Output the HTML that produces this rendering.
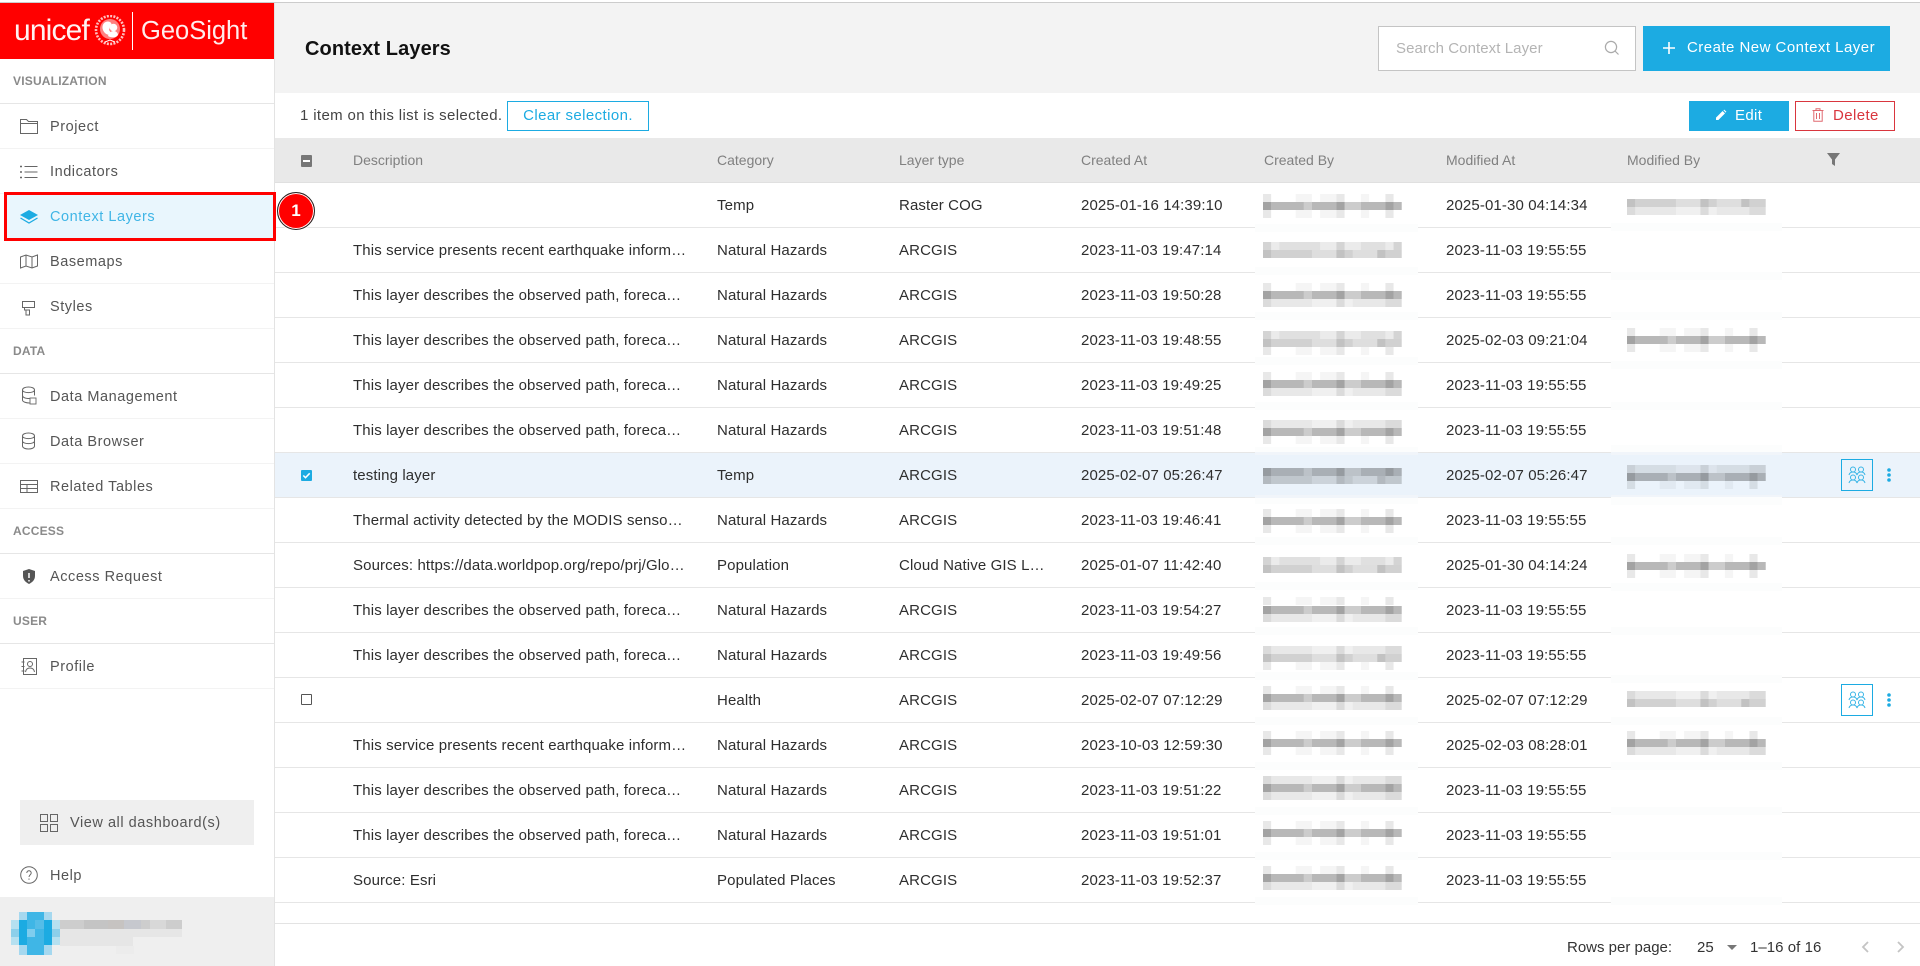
<!DOCTYPE html>
<html><head><meta charset="utf-8"><title>Context Layers</title>
<style>
*{box-sizing:border-box}
html,body{margin:0;padding:0;width:1920px;height:966px;overflow:hidden;background:#fff;font-family:"Liberation Sans",sans-serif}
.a{position:absolute}
#top{left:0;top:2px;width:1920px;height:1px;background:#ccc}
#side{left:0;top:3px;width:275px;height:963px;border-right:1px solid #e3e3e3;background:#fff}
.logo{left:0;top:3px;width:274px;height:56px;background:#f00;color:#fff;overflow:hidden}
.sec{position:absolute;left:13px;font-size:12px;font-weight:700;color:#8a8a8a;line-height:16px;letter-spacing:.2px}
.ln{position:absolute;left:0;width:274px;height:1px;background:#e6e6e6}
.ln.t{background:#f3f3f3}
.it{position:absolute;left:50px;font-size:14.5px;line-height:20px;color:#555;letter-spacing:.55px;white-space:nowrap;margin-top:1px}
.r{position:absolute;left:275px;width:1645px;height:45px;border-bottom:1px solid #e6e6e6;font-size:15px;letter-spacing:.12px;color:#2e2e2e;line-height:46px;white-space:nowrap}
.r span{position:absolute;top:0}
.c1{left:78px}.c2{left:442px}.c3{left:624px}.c4{left:806px}.c6{left:1171px}
.h{position:absolute;left:275px;top:138px;width:1645px;height:45px;background:#e9e9e9;border-bottom:1px solid #e0e0e0;font-size:14px;color:#808080;line-height:44px}
.h span{position:absolute;top:0}
.btn{position:absolute;text-align:center;white-space:nowrap}
.sel{background:#ebf3fb}
</style></head><body>
<div class="a" id="top"></div>
<div class="a" style="left:275px;top:3px;width:1645px;height:90px;background:#f3f3f3"></div>
<div class="a" style="left:305px;top:36px;font-size:20px;font-weight:700;line-height:26px;color:#111;letter-spacing:.1px">Context Layers</div>
<div class="a" style="left:1378px;top:26px;width:258px;height:45px;background:#fff;border:1px solid #c4c4c4"></div>
<div class="a" style="left:1396px;top:38px;font-size:15px;line-height:22px;color:#b4b4b4;letter-spacing:.08px">Search Context Layer</div>
<svg class="a" style="left:1603px;top:39px" width="18" height="18" viewBox="0 0 18 18" fill="none" stroke="#aaa" stroke-width="1.2"><circle cx="8" cy="8" r="5.6"/><path d="M12 12l3.5 3.5"/></svg>
<div class="a" style="left:1643px;top:26px;width:247px;height:45px;background:#1cabe2"></div>
<svg class="a" style="left:1662px;top:41px" width="14" height="14" viewBox="0 0 14 14" stroke="#fff" stroke-width="1.6"><path d="M7 1v12M1 7h12"/></svg>
<div class="a" style="left:1687px;top:37px;font-size:15px;line-height:22px;color:#fff;letter-spacing:.47px;white-space:nowrap">Create New Context Layer</div>

<div class="a" style="left:300px;top:105px;font-size:15px;line-height:20px;color:#444;letter-spacing:.36px;white-space:nowrap;margin-top:1px">1 item on this list is selected.</div>
<div class="btn" style="left:507px;top:101px;width:142px;height:30px;border:1px solid #1cabe2;color:#1cabe2;font-size:15px;line-height:28px;letter-spacing:.4px">Clear selection.</div>
<div class="a" style="left:1689px;top:101px;width:100px;height:30px;background:#1cabe2"></div>
<svg class="a" style="left:1715px;top:109px" width="12" height="12" viewBox="0 0 12 12" fill="#fff"><path d="M1 11v-2.400L7.600 2 10 4.400 3.400 11zM8.400 1.300l.8-.7 2.200 2.200-.8.8z"/></svg>
<div class="a" style="left:1735px;top:106px;font-size:15px;line-height:20px;color:#fff;letter-spacing:.35px">Edit</div>
<div class="a" style="left:1795px;top:101px;width:100px;height:30px;border:1px solid #d9363e"></div>
<svg class="a" style="left:1812px;top:108px" width="12" height="14" viewBox="0 0 12 14" fill="none" stroke="#e06a70" stroke-width="1"><path d="M.5 2.500h11M4 2.500V.8h4v1.700M1.800 2.500v10.800h8.400V2.500M4.500 5v6M7.500 5v6"/></svg>
<div class="a" style="left:1833px;top:106px;font-size:15px;line-height:20px;color:#d9363e;letter-spacing:.4px">Delete</div>

<div class="h"><span style="left:78px">Description</span><span class="c2">Category</span><span class="c3">Layer type</span><span class="c4">Created At</span><span style="left:989px">Created By</span><span class="c6">Modified At</span><span style="left:1352px">Modified By</span></div>
<div class="a" style="left:301px;top:155px;width:11px;height:12px;background:#777;border-radius:1px"></div>
<div class="a" style="left:303px;top:160px;width:7px;height:2px;background:#fff"></div>
<svg class="a" style="left:1827px;top:153px" width="13" height="13" viewBox="0 0 13 13" fill="#777"><path d="M0 0h13L8 6.500V13L5 11V6.500z"/></svg>

<div class="r" style="top:183px"><span class="c2">Temp</span><span class="c3">Raster COG</span><span class="c4">2025-01-16 14:39:10</span><span class="c6">2025-01-30 04:14:34</span></div>
<div class="r" style="top:228px"><span class="c1">This service presents recent earthquake inform…</span><span class="c2">Natural Hazards</span><span class="c3">ARCGIS</span><span class="c4">2023-11-03 19:47:14</span><span class="c6">2023-11-03 19:55:55</span></div>
<div class="r" style="top:273px"><span class="c1">This layer describes the observed path, foreca…</span><span class="c2">Natural Hazards</span><span class="c3">ARCGIS</span><span class="c4">2023-11-03 19:50:28</span><span class="c6">2023-11-03 19:55:55</span></div>
<div class="r" style="top:318px"><span class="c1">This layer describes the observed path, foreca…</span><span class="c2">Natural Hazards</span><span class="c3">ARCGIS</span><span class="c4">2023-11-03 19:48:55</span><span class="c6">2025-02-03 09:21:04</span></div>
<div class="r" style="top:363px"><span class="c1">This layer describes the observed path, foreca…</span><span class="c2">Natural Hazards</span><span class="c3">ARCGIS</span><span class="c4">2023-11-03 19:49:25</span><span class="c6">2023-11-03 19:55:55</span></div>
<div class="r" style="top:408px"><span class="c1">This layer describes the observed path, foreca…</span><span class="c2">Natural Hazards</span><span class="c3">ARCGIS</span><span class="c4">2023-11-03 19:51:48</span><span class="c6">2023-11-03 19:55:55</span></div>
<div class="r sel" style="top:453px"><span class="c1">testing layer</span><span class="c2">Temp</span><span class="c3">ARCGIS</span><span class="c4">2025-02-07 05:26:47</span><span class="c6">2025-02-07 05:26:47</span></div>
<div class="r" style="top:498px"><span class="c1">Thermal activity detected by the MODIS senso…</span><span class="c2">Natural Hazards</span><span class="c3">ARCGIS</span><span class="c4">2023-11-03 19:46:41</span><span class="c6">2023-11-03 19:55:55</span></div>
<div class="r" style="top:543px"><span class="c1">Sources: https://data.worldpop.org/repo/prj/Glo…</span><span class="c2">Population</span><span class="c3">Cloud Native GIS L…</span><span class="c4">2025-01-07 11:42:40</span><span class="c6">2025-01-30 04:14:24</span></div>
<div class="r" style="top:588px"><span class="c1">This layer describes the observed path, foreca…</span><span class="c2">Natural Hazards</span><span class="c3">ARCGIS</span><span class="c4">2023-11-03 19:54:27</span><span class="c6">2023-11-03 19:55:55</span></div>
<div class="r" style="top:633px"><span class="c1">This layer describes the observed path, foreca…</span><span class="c2">Natural Hazards</span><span class="c3">ARCGIS</span><span class="c4">2023-11-03 19:49:56</span><span class="c6">2023-11-03 19:55:55</span></div>
<div class="r" style="top:678px"><span class="c2">Health</span><span class="c3">ARCGIS</span><span class="c4">2025-02-07 07:12:29</span><span class="c6">2025-02-07 07:12:29</span></div>
<div class="r" style="top:723px"><span class="c1">This service presents recent earthquake inform…</span><span class="c2">Natural Hazards</span><span class="c3">ARCGIS</span><span class="c4">2023-10-03 12:59:30</span><span class="c6">2025-02-03 08:28:01</span></div>
<div class="r" style="top:768px"><span class="c1">This layer describes the observed path, foreca…</span><span class="c2">Natural Hazards</span><span class="c3">ARCGIS</span><span class="c4">2023-11-03 19:51:22</span><span class="c6">2023-11-03 19:55:55</span></div>
<div class="r" style="top:813px"><span class="c1">This layer describes the observed path, foreca…</span><span class="c2">Natural Hazards</span><span class="c3">ARCGIS</span><span class="c4">2023-11-03 19:51:01</span><span class="c6">2023-11-03 19:55:55</span></div>
<div class="r" style="top:858px"><span class="c1">Source: Esri</span><span class="c2">Populated Places</span><span class="c3">ARCGIS</span><span class="c4">2023-11-03 19:52:37</span><span class="c6">2023-11-03 19:55:55</span></div>

<svg class="a" style="left:0;top:0" width="1920" height="966" viewBox="0 0 1920 966">
<defs>
<g id="D" transform="scale(1.02 1)"><path fill-opacity=".36" d="M0 0h8v8H0zM72 0h8v8h-8zM120 0h8v8h-8z"/><path fill-opacity=".28" d="M8 0h32v8H8zM48 0h24v8H48zM96 0h24v8H96zM128 0h8v8h-8z"/><path fill-opacity=".2" d="M40 0h8v8h-8zM80 0h16v8H80z"/></g>
<g id="M" transform="scale(1.02 1)"><path fill-opacity=".24" d="M0 0h8v8H0zM72 0h8v8h-8zM112 0h8v8h-8z"/><path fill-opacity=".18" d="M8 0h40v8H8zM80 0h8v8h-8zM120 0h16v8h-16z"/><path fill-opacity=".13" d="M48 0h24v8H48zM88 0h24v8H88z"/></g>
<g id="N" transform="scale(1.02 1)"><path fill-opacity=".17" d="M0 0h8v8H0zM72 0h8v8h-8zM128 0h8v8h-8z"/><path fill-opacity=".12" d="M16 0h40v8H16zM96 0h24v8H96z"/><path fill-opacity=".08" d="M8 0h8v8H8zM56 0h16v8H56zM80 0h16v8H80zM120 0h8v8h-8z"/></g>
<g id="L" transform="scale(1.02 1)"><path fill-opacity=".14" d="M0 0h8v8H0zM72 0h8v8h-8zM120 0h16v8h-16z"/><path fill-opacity=".09" d="M8 0h40v8H8zM88 0h32v8H88z"/><path fill-opacity=".06" d="M48 0h24v8H48zM80 0h8v8h-8z"/></g>
<g id="F" transform="scale(1.02 1)"><path fill-opacity=".09" d="M0 0h8v8H0zM72 0h8v8h-8zM120 0h8v8h-8z"/><path fill-opacity=".04" d="M32 0h16v8H32zM56 0h16v8H56zM96 0h8v8h-8z"/></g>
</defs>
<g fill="#fcfdfd">
<path d="M1255 224h163v8h-163zM1255 267h163v8h-163zM1255 312h163v8h-163zM1255 357h163v8h-163zM1255 402h163v8h-163zM1255 447h163v5h-163zM1255 497h163v7h-163zM1255 537h163v8h-163zM1255 582h163v8h-163zM1255 627h163v8h-163zM1255 672h163v8h-163zM1255 717h163v8h-163zM1255 762h163v8h-163zM1255 807h163v8h-163zM1255 852h163v8h-163zM1255 897h163v8h-163z"/>
<path d="M1611 223h171v8h-171zM1611 272h171v8h-171zM1611 312h171v8h-171zM1611 361h171v8h-171zM1611 402h171v8h-171zM1611 445h171v7h-171zM1611 497h171v8h-171zM1611 537h171v8h-171zM1611 583h171v8h-171zM1611 627h171v8h-171zM1611 675h171v8h-171zM1611 717h171v8h-171zM1611 762h171v8h-171zM1611 807h171v8h-171zM1611 852h171v8h-171zM1611 897h171v8h-171z"/>
</g>
<path d="M1255 452h163v3h-163zM1255 495h163v3h-163zM1611 452h171v3h-171zM1611 495h171v2h-171z" fill="#f1f5fa"/>
<g transform="translate(1263 0)">
<use href="#F" y="194"/><use href="#D" y="202"/><use href="#F" y="210"/>
<use href="#N" y="242"/><use href="#M" y="250"/>
<use href="#F" y="283"/><use href="#D" y="291"/><use href="#L" y="299"/>
<use href="#N" y="331"/><use href="#M" y="339"/><use href="#F" y="347"/>
<use href="#F" y="372"/><use href="#D" y="380"/><use href="#L" y="388"/>
<use href="#L" y="420"/><use href="#D" y="428"/><use href="#F" y="436"/>
<use href="#D" y="468"/><use href="#M" y="476"/>
<use href="#F" y="509"/><use href="#D" y="517"/><use href="#F" y="525"/>
<use href="#N" y="557"/><use href="#M" y="565"/>
<use href="#F" y="597"/><use href="#D" y="606"/><use href="#L" y="614"/>
<use href="#L" y="646"/><use href="#M" y="654"/><use href="#F" y="662"/>
<use href="#F" y="686"/><use href="#D" y="694"/><use href="#L" y="702"/>
<use href="#F" y="731"/><use href="#D" y="739"/><use href="#F" y="747"/>
<use href="#L" y="776"/><use href="#D" y="784"/><use href="#L" y="792"/>
<use href="#F" y="821"/><use href="#D" y="829"/><use href="#F" y="837"/>
<use href="#F" y="866"/><use href="#D" y="874"/><use href="#L" y="882"/>
</g>
<g transform="translate(1627 0)">
<use href="#M" y="199"/><use href="#L" y="207"/>
<use href="#F" y="328"/><use href="#D" y="336"/><use href="#F" y="344"/>
<use href="#L" y="465"/><use href="#D" y="473"/><use href="#F" y="481"/>
<use href="#F" y="554"/><use href="#D" y="562"/><use href="#F" y="570"/>
<use href="#L" y="691"/><use href="#M" y="699"/>
<use href="#F" y="731"/><use href="#D" y="739"/><use href="#L" y="747"/>
</g>
</svg>

<div class="a" style="left:301px;top:470px;width:11px;height:11px;background:#1cabe2;border-radius:1px"></div>
<svg class="a" style="left:301px;top:470px" width="11" height="11" viewBox="0 0 11 11" fill="none" stroke="#fff" stroke-width="1.500"><path d="M2.300 5.500l2.200 2.200 4.200-4.400"/></svg>
<div class="a" style="left:301px;top:694px;width:11px;height:11px;border:1px solid #555;border-radius:1px"></div>

<div class="a" style="left:1841px;top:459px;width:32px;height:32px;border:1px solid #1cabe2"></div>
<div class="a" style="left:1841px;top:684px;width:32px;height:32px;border:1px solid #1cabe2"></div>
<svg class="a" style="left:1848px;top:466px" width="18" height="18" viewBox="0 0 18 18" fill="none" stroke="#38b5e6" stroke-width="1"><circle cx="5" cy="3.500" r="2.500"/><circle cx="13" cy="3.500" r="2.500"/><path d="M1 9c.5-2 2-3 4-3s3.500 1 4 3c.5-2 2-3 4-3s3.500 1 4 3"/><circle cx="5" cy="11.500" r="2.500"/><circle cx="13" cy="11.500" r="2.500"/><path d="M1 17c.5-2 2-3 4-3s3.500 1 4 3c.5-2 2-3 4-3s3.500 1 4 3"/></svg>
<svg class="a" style="left:1848px;top:691px" width="18" height="18" viewBox="0 0 18 18" fill="none" stroke="#38b5e6" stroke-width="1"><circle cx="5" cy="3.500" r="2.500"/><circle cx="13" cy="3.500" r="2.500"/><path d="M1 9c.5-2 2-3 4-3s3.500 1 4 3c.5-2 2-3 4-3s3.500 1 4 3"/><circle cx="5" cy="11.500" r="2.500"/><circle cx="13" cy="11.500" r="2.500"/><path d="M1 17c.5-2 2-3 4-3s3.500 1 4 3c.5-2 2-3 4-3s3.500 1 4 3"/></svg>
<svg class="a" style="left:1886px;top:467px" width="6" height="16" viewBox="0 0 6 16" fill="#1cabe2"><circle cx="3" cy="3" r="1.800"/><circle cx="3" cy="8" r="1.800"/><circle cx="3" cy="13" r="1.800"/></svg>
<svg class="a" style="left:1886px;top:692px" width="6" height="16" viewBox="0 0 6 16" fill="#1cabe2"><circle cx="3" cy="3" r="1.800"/><circle cx="3" cy="8" r="1.800"/><circle cx="3" cy="13" r="1.800"/></svg>

<div class="a" style="left:275px;top:923px;width:1645px;height:1px;background:#e3e3e3"></div>
<div class="a" style="left:1567px;top:938px;font-size:15px;line-height:20px;color:#333;white-space:nowrap">Rows per page:</div>
<div class="a" style="left:1697px;top:938px;font-size:15px;line-height:20px;color:#333">25</div>
<svg class="a" style="left:1727px;top:945px" width="10" height="5" viewBox="0 0 10 5" fill="#777"><path d="M0 0h10L5 5z"/></svg>
<div class="a" style="left:1750px;top:938px;font-size:15px;line-height:20px;color:#333;white-space:nowrap;letter-spacing:.05px">1–16 of 16</div>
<svg class="a" style="left:1860px;top:940px" width="46" height="14" viewBox="0 0 46 14" fill="none" stroke="#c4c4c4" stroke-width="1.800"><path d="M8 2L3 7l5 5M38 2l5 5-5 5"/></svg>

<div class="a" id="side"></div>
<div class="a logo">
<div class="a" style="left:14px;top:10px;font-size:30px;line-height:36px;letter-spacing:-.85px;white-space:nowrap;opacity:.95">unicef</div>
<svg class="a" style="left:94px;top:12px" width="32" height="32" viewBox="0 0 32 32"><circle cx="16" cy="15" r="14" fill="none" stroke="#fff" stroke-width="2.600" stroke-dasharray="2 1.300" opacity=".75"/><circle cx="16" cy="14" r="10" fill="#ff8080"/><path d="M9 15c-2-5 2-10 7-8 2 1 2 4 0 5l-1 3 2 3c-1 3-6 2-8-3z" fill="#fff"/><circle cx="19.500" cy="12.500" r="3.800" fill="#fff"/><path d="M14 21c1-4 4-5 6-5s4 2 4 4c-2 3-7 3-10 1z" fill="#fff"/><path d="M11 27l5-2 5 2" stroke="#fff" fill="none"/></svg>
<div class="a" style="left:132px;top:9px;width:1px;height:38px;background:#fff"></div>
<div class="a" style="left:141px;top:13px;font-size:25.5px;line-height:30px;white-space:nowrap;opacity:.93">GeoSight</div>
</div>

<div class="sec" style="top:73px">VISUALIZATION</div><div class="ln" style="top:103px"></div>
<div class="it" style="top:116px">Project</div><div class="ln t" style="top:148px"></div>
<div class="it" style="top:161px">Indicators</div><div class="ln t" style="top:193px"></div>
<div class="a" style="left:6px;top:195px;width:268px;height:43px;background:#e9f6fd"></div>
<div class="it" style="top:206px;color:#3fb5e6">Context Layers</div>
<div class="a" style="left:4px;top:192px;width:272px;height:49px;border:3px solid #f00"></div>
<div class="it" style="top:251px">Basemaps</div><div class="ln t" style="top:283px"></div>
<div class="it" style="top:296px">Styles</div><div class="ln t" style="top:328px"></div>
<div class="sec" style="top:343px">DATA</div><div class="ln" style="top:373px"></div>
<div class="it" style="top:386px">Data Management</div><div class="ln t" style="top:418px"></div>
<div class="it" style="top:431px">Data Browser</div><div class="ln t" style="top:463px"></div>
<div class="it" style="top:476px">Related Tables</div><div class="ln t" style="top:508px"></div>
<div class="sec" style="top:523px">ACCESS</div><div class="ln" style="top:553px"></div>
<div class="it" style="top:566px">Access Request</div><div class="ln t" style="top:598px"></div>
<div class="sec" style="top:613px">USER</div><div class="ln" style="top:643px"></div>
<div class="it" style="top:656px">Profile</div><div class="ln t" style="top:688px"></div>

<svg class="a" style="left:0;top:0" width="274" height="966" viewBox="0 0 274 966" fill="none" stroke="#666" stroke-width="1">
<path d="M20.500 133.500v-14h6l2 2h9v12z M20.500 123.500h17" />
<path d="M24.500 166.500h13M24.500 172h13M24.500 177.500h13" /><path d="M20 166.500h2M20 172h2M20 177.500h2" stroke-width="1.400"/>
<path d="M29 210l9 5-9 5-9-5z" fill="#1cabe2" stroke="none"/><path d="M20.500 218l8.500 5 8.500-5" stroke="#1cabe2" stroke-width="1.300"/>
<path d="M20.500 257l5.500-2 6 2 5.500-2v11l-5.500 2-6-2-5.500 2zM26 255v11M32 257v11"/>
<path d="M22.500 301.500h12v6h-12zM24.500 307.500v2.500h5v5h-3.500v-5"/>
<path d="M22.500 390c0-4 12-4 12 0v5.500M22.500 390v10c0 2 4 3 7 3M22.500 390c0 3.500 12 3.500 12 0M22.500 395c0 3 4 3.500 7 3.500"/><rect x="30" y="398" width="6" height="6" stroke-width=".9"/>
<path d="M22.500 436c0-4 12-4 12 0v10c0 4-12 4-12 0zM22.500 436c0 3.500 12 3.500 12 0M22.500 441c0 3.500 12 3.500 12 0"/>
<path d="M20.500 480.500h17v12h-17zM20.500 484.500h17M20.500 488.500h17M27 484.500v8"/>
<path d="M29 569l6 2v5c0 4-3 6.500-6 8-3-1.500-6-4-6-8v-5z" fill="#555" stroke="none"/><path d="M29 573v5" stroke="#fff" stroke-width="1.500"/><path d="M29 580v1.500" stroke="#fff" stroke-width="1.500"/>
<path d="M23.500 658.500h13v16h-13z"/><path d="M21.500 662h3M21.500 666.500h3M21.500 671h3"/><circle cx="30" cy="664" r="2.500"/><path d="M25.500 672c.5-3 2-4 4.500-4s4 1 4.500 4"/>
</svg>

<div class="a" style="left:20px;top:800px;width:234px;height:45px;background:#efefef"></div>
<svg class="a" style="left:40px;top:814px" width="18" height="18" viewBox="0 0 18 18" fill="none" stroke="#666"><path d="M.5.500h7v7h-7zM10.500.500h7v7h-7zM.5 10.500h7v7h-7zM10.500 10.500h7v7h-7z"/></svg>
<div class="a" style="left:70px;top:813px;font-size:14.5px;line-height:20px;color:#555;letter-spacing:.55px;white-space:nowrap">View all dashboard(s)</div>
<svg class="a" style="left:20px;top:866px" width="18" height="18" viewBox="0 0 18 18" fill="none" stroke="#666"><circle cx="9" cy="9" r="8.300"/><path d="M6.800 7c0-3 4.400-3 4.400 0 0 1.800-2.200 2-2.200 4"/><path d="M9 12.500v1.300"/></svg>
<div class="it" style="top:865px;color:#555">Help</div>

<div class="a" style="left:0;top:897px;width:274px;height:69px;background:#efefef"></div>
<svg class="a" style="left:0;top:897px" width="274" height="69" viewBox="0 897 274 69">
<rect x="19" y="912" width="8" height="8" fill="#a5d8ef"/><rect x="27" y="912" width="17" height="8" fill="#3fb6e6"/><rect x="44" y="912" width="8" height="8" fill="#a5d8ef"/>
<rect x="11" y="920" width="8" height="9" fill="#b5e0f0"/><rect x="19" y="920" width="8" height="9" fill="#1cabe2"/><rect x="27" y="920" width="8" height="9" fill="#3fb6e6"/><rect x="35" y="920" width="9" height="9" fill="#55bde8"/><rect x="44" y="920" width="8" height="9" fill="#1cabe2"/><rect x="52" y="920" width="8" height="9" fill="#b5e0f0"/>
<rect x="11" y="929" width="8" height="8" fill="#8ccfea"/><rect x="19" y="929" width="8" height="8" fill="#1cabe2"/><rect x="27" y="929" width="8" height="8" fill="#7fcdee"/><rect x="35" y="929" width="9" height="8" fill="#3fb6e6"/><rect x="44" y="929" width="8" height="8" fill="#1cabe2"/><rect x="52" y="929" width="8" height="8" fill="#8ccfea"/>
<rect x="11" y="937" width="8" height="8" fill="#b5e0f0"/><rect x="19" y="937" width="8" height="8" fill="#1cabe2"/><rect x="27" y="937" width="17" height="8" fill="#3fb6e6"/><rect x="44" y="937" width="8" height="8" fill="#1cabe2"/><rect x="52" y="937" width="8" height="8" fill="#b5e0f0"/>
<rect x="19" y="945" width="8" height="10" fill="#a5d8ef"/><rect x="27" y="945" width="17" height="10" fill="#3fb6e6"/><rect x="44" y="945" width="8" height="10" fill="#a5d8ef"/>
<rect x="60" y="920" width="122" height="9" fill="#cdcdcd"/><rect x="84" y="920" width="24" height="9" fill="#c4c4c4"/><rect x="108" y="920" width="16" height="9" fill="#c6c3c1"/><rect x="124" y="920" width="17" height="9" fill="#c6c8ce"/><rect x="150" y="920" width="16" height="9" fill="#d8d8d8"/>
<rect x="60" y="929" width="122" height="8" fill="#e6e6e6"/><rect x="60" y="937" width="73" height="9" fill="#e6e6e6"/><rect x="116" y="946" width="18" height="8" fill="#ececec"/>
</svg>

<div class="a" style="left:277px;top:192px;width:38px;height:38px;border-radius:50%;background:#f00;border:1px solid #222;box-shadow:inset 0 0 0 1px #fff,0 0 0 1px #fff;color:#fff;font-size:17px;font-weight:700;line-height:36px;text-align:center">1</div>
</body></html>
